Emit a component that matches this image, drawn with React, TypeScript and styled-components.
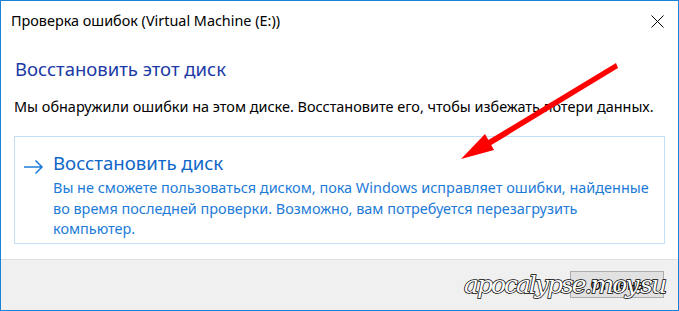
import React from "react";
import styled, { createGlobalStyle } from "styled-components";

const Global = createGlobalStyle`
  html, body { margin: 0; padding: 0; background: #ffffff; }
  body { font-family: "Noto Sans", "Open Sans", sans-serif; }
  * { box-sizing: border-box; }
`;

const Window = styled.div`
  position: relative;
  width: 679px;
  height: 311px;
  border: 1px solid #1883d7;
  background: #ffffff;
  display: flex;
  flex-direction: column;
  overflow: hidden;
`;

const TitleBar = styled.div`
  height: 38px;
  flex: none;
  display: flex;
  align-items: center;
  justify-content: space-between;
  padding: 1px 14px 0 10px;
`;

const TitleText = styled.div`
  font-size: 14.4px;
  color: #000000;
  white-space: nowrap;
`;

const CloseButton = styled.div`
  width: 14px;
  height: 14px;
  display: flex;
  align-items: center;
  justify-content: center;
  margin-top: 2px;
`;

const Content = styled.div`
  flex: 1;
  padding: 17px 13px 0 13px;
  display: flex;
  flex-direction: column;
`;

const Heading = styled.div`
  font-size: 18.5px;
  color: #1b3aa6;
  padding-left: 1px;
  line-height: 26px;
  white-space: nowrap;
`;

const Body = styled.div`
  margin-top: 15px;
  font-size: 14.45px;
  color: #000000;
  line-height: 20px;
  white-space: nowrap;
`;

const CommandLink = styled.div`
  margin-top: 19px;
  border: 1px solid #c3def5;
  display: flex;
  padding: 13px 10px 10px 9px;
  height: 108px;
`;

const LinkArrow = styled.div`
  width: 29px;
  flex: none;
  padding-top: 7px;
`;

const LinkTexts = styled.div`
  display: flex;
  flex-direction: column;
`;

const LinkTitle = styled.div`
  font-size: 18.6px;
  color: #0f66c8;
  line-height: 25px;
  margin-bottom: 3px;
  white-space: nowrap;
`;

const LinkNote = styled.div`
  font-size: 14.45px;
  color: #1c7bd9;
  line-height: 20.5px;
  white-space: nowrap;
`;

const Footer = styled.div`
  height: 51px;
  flex: none;
  background: #f0f0f0;
  border-top: 1px solid #dfdfdf;
  display: flex;
  justify-content: flex-end;
  align-items: flex-start;
  padding: 11px 14px 0 0;
`;

const Button = styled.div`
  width: 94px;
  height: 27px;
  background: #e1e1e1;
  border: 1px solid #adadad;
  font-size: 14.4px;
  color: #000;
  display: flex;
  align-items: center;
  justify-content: center;
`;

const Overlay = styled.svg`
  position: absolute;
  left: 0;
  top: 0;
  pointer-events: none;
`;

const Watermark = styled.div`
  position: absolute;
  right: 13px;
  bottom: 10px;
  font-family: "DejaVu Serif", "Liberation Serif", serif;
  font-style: italic;
  font-size: 25px;
  color: #ffffff;
  letter-spacing: -2px;
  -webkit-text-stroke: 1.5px #000000;
  paint-order: stroke fill;
  line-height: 30px;
`;

export default function App() {
  return (
    <>
      <Global />
      <Window>
        <TitleBar>
          <TitleText>Проверка ошибок (Virtual Machine (E:))</TitleText>
          <CloseButton>
            <svg width="13" height="13" viewBox="0 0 13 13">
              <path d="M0.5 0.5 L12.5 12.5 M12.5 0.5 L0.5 12.5" stroke="#000" strokeWidth="1" />
            </svg>
          </CloseButton>
        </TitleBar>
        <Content>
          <Heading>Восстановить этот диск</Heading>
          <Body>
            Мы обнаружили ошибки на этом диске. Восстановите его, чтобы избежать потери данных.
          </Body>
          <CommandLink>
            <LinkArrow>
              <svg width="20" height="14" viewBox="0 0 20 14">
                <path d="M0 7 H18 M11.5 0.5 L18 7 L11.5 13.5" stroke="#1c7bd9" strokeWidth="1.5" fill="none" />
              </svg>
            </LinkArrow>
            <LinkTexts>
              <LinkTitle>Восстановить диск</LinkTitle>
              <LinkNote>
                Вы не сможете пользоваться диском, пока Windows исправляет ошибки, найденные
                <br />
                во время последней проверки. Возможно, вам потребуется перезагрузить
                <br />
                компьютер.
              </LinkNote>
            </LinkTexts>
          </CommandLink>
        </Content>
        <Footer>
          <Button>Отмена</Button>
        </Footer>
        <Overlay width="679" height="311" viewBox="0 0 679 311">
          <path d="M615 62 L484 141 L487 146 L617 67 Z" fill="#ff0000" />
          <path d="M460 158 L484 133 L493 149 Z" fill="#ff0000" />
        </Overlay>
        <Watermark>apocalypse.moy.su</Watermark>
      </Window>
    </>
  );
}
